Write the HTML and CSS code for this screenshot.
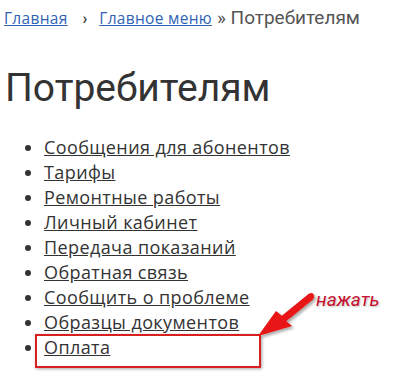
FILE: index.html
```html
<!DOCTYPE html>
<html lang="ru">
<head>
  <meta charset="UTF-8" />
  <meta name="viewport" content="width=device-width, initial-scale=1" />
  <title>Потребителям</title>
  <link rel="stylesheet" href="styles.css">
</head>
<body>
  <div class="page">
    <div class="breadcrumbs">
      <a href="#">Главная</a>
      <span class="chevron">&rsaquo;</span>
      <a href="#">Главное меню</a>
      <span class="current">&raquo; Потребителям</span>
    </div>

    <h1>Потребителям</h1>

    <ul class="menu">
      <li><a href="#">Сообщения для абонентов</a></li>
      <li><a href="#">Тарифы</a></li>
      <li><a href="#">Ремонтные работы</a></li>
      <li><a href="#">Личный кабинет</a></li>
      <li><a href="#">Передача показаний</a></li>
      <li><a href="#">Обратная связь</a></li>
      <li><a href="#">Сообщить о проблеме</a></li>
      <li><a href="#">Образцы документов</a></li>
      <li class="marked"><a href="#">Оплата</a></li>
    </ul>

    <div class="hint">
      <span class="hint-text">нажать</span>
      <svg class="hint-arrow" width="70" height="52" viewBox="0 0 70 52">
        <defs>
          <filter id="sh" x="-20%" y="-20%" width="150%" height="150%">
            <feDropShadow dx="2" dy="2" stdDeviation="1.5" flood-color="#000" flood-opacity="0.35"/>
          </filter>
        </defs>
        <path d="M4 44 L22 19 L27.8 23.8 L54.8 1.8 Q58.5 -0.5 60 3 Q60.5 5.5 59.2 7.2 L32.2 29.2 L38 34 Z" fill="#e81212" filter="url(#sh)"/>
      </svg>
    </div>
  </div>
</body>
</html>
```

FILE: styles.css
```css
* {
  box-sizing: border-box;
}

body {
  margin: 0;
  background: #fff;
  font-family: Roboto, "Noto Sans", sans-serif;
  color: #333;
}

.page {
  position: relative;
  padding: 6px 4px 20px;
}

.breadcrumbs {
  font-size: 16px;
  line-height: 24px;
  color: #555;
}

.breadcrumbs a {
  font-family: "Open Sans", Roboto, sans-serif;
  font-size: 15.5px;
  letter-spacing: 0.3px;
  color: #2f62b5;
}

.chevron {
  font-weight: 700;
  color: #444;
  margin: 0 8px 0 11px;
}

.current {
  font-size: 19px;
  margin-left: 1px;
}

h1 {
  margin: 34px 0 24px 1px;
  font-size: 39px;
  font-weight: 400;
  line-height: 46px;
  color: #333;
}

.menu {
  margin: 0;
  padding-left: 40px;
  font-family: "Open Sans", Roboto, sans-serif;
  font-size: 18px;
  letter-spacing: 0.4px;
  line-height: 25px;
}

.menu a {
  color: #333;
}

.marked {
  position: relative;
}

.marked::after {
  content: "";
  position: absolute;
  left: -9px;
  top: -1px;
  width: 222px;
  height: 30px;
  border: 2px solid #d82020;
  box-shadow: 1px 1px 3px rgba(0, 0, 0, 0.35);
}

.hint {
  position: absolute;
  left: 254px;
  top: 290px;
}

.hint-text {
  position: absolute;
  left: 62px;
  top: -2px;
  font-size: 19px;
  font-style: italic;
  color: #c8102e;
  text-shadow: 1px 1px 2px rgba(0, 0, 0, 0.25);
  white-space: nowrap;
}

.hint-arrow {
  position: absolute;
  left: 0;
  top: 2px;
}
```
